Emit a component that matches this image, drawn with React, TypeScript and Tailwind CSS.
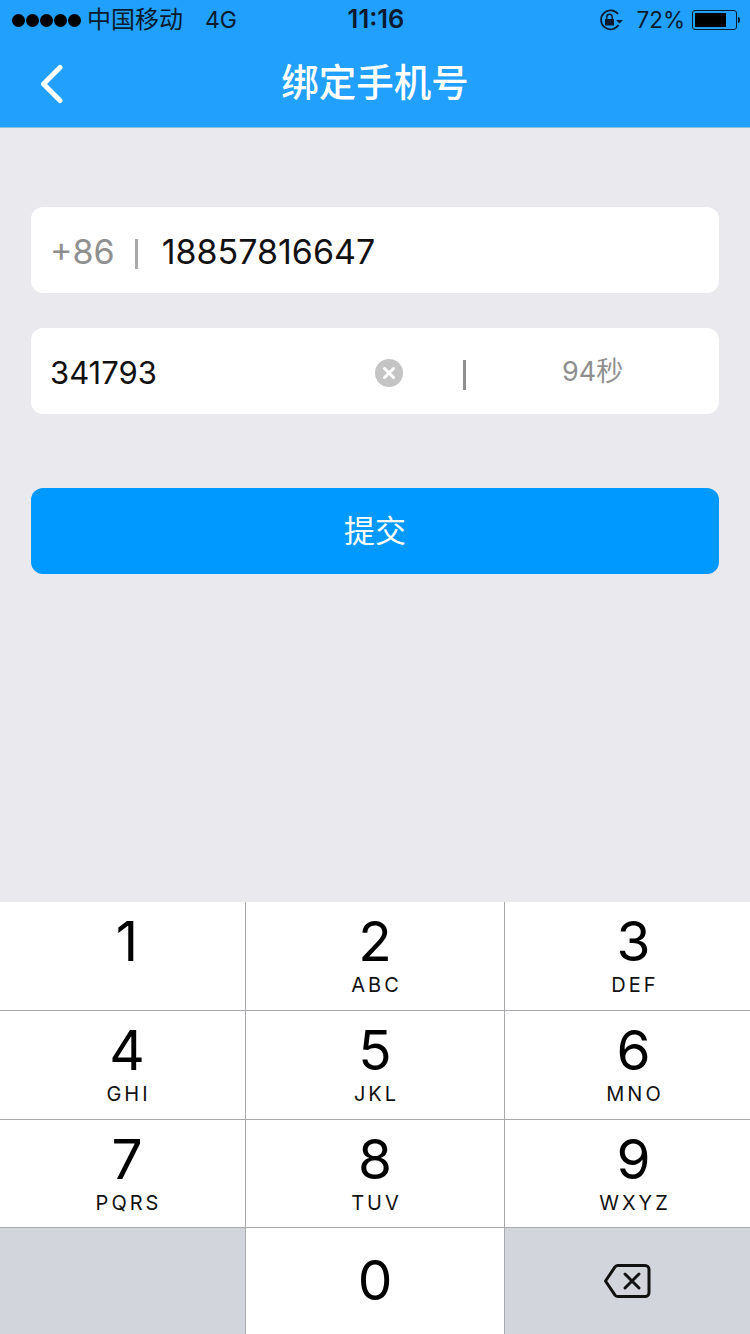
const font = { fontFamily: '"Inter", "Noto Sans CJK SC", sans-serif' };

const keys = [
  { n: "1", s: "", cls: "pl-[9px]" },
  { n: "2", s: "ABC", cls: "pl-0" },
  { n: "3", s: "DEF", cls: "pl-[12px]" },
  { n: "4", s: "GHI", cls: "pl-[9px]" },
  { n: "5", s: "JKL", cls: "pl-0" },
  { n: "6", s: "MNO", cls: "pl-[12px]" },
  { n: "7", s: "PQRS", cls: "pl-[9px]" },
  { n: "8", s: "TUV", cls: "pl-0" },
  { n: "9", s: "WXYZ", cls: "pl-[12px]" },
];

const Key = ({ n, s, cls }: { n: string; s: string; cls: string }) => (
  <div className={`flex flex-col items-center bg-white pt-[9px] ${cls}`}>
    <span className="text-[55px] leading-[60px] text-black">{n}</span>
    <span className="pl-[3px] pt-[1px] text-[20px] leading-[26px] tracking-[3px] text-[#111]">{s}</span>
  </div>
);

const StatusBar = () => (
  <div className="flex h-[40px] items-center justify-between pl-[12px] pr-[10px] text-[#0b1a2e]">
    <div className="flex w-[300px] items-center text-[24px]">
      <div className="flex gap-[1px]">
        {[0, 1, 2, 3, 4].map((i) => (
          <span key={i} className="h-[13px] w-[13px] rounded-full bg-black" />
        ))}
      </div>
      <span className="ml-[6px]">中国移动</span>
      <span className="ml-[22px] text-[23px]">4G</span>
    </div>
    <span className="-translate-y-[1px] text-[25.5px] font-semibold">11:16</span>
    <div className="flex w-[300px] items-center justify-end text-[22.5px]">
      <svg width="24" height="22" viewBox="0 0 24 22" fill="none" className="mr-[13px]">
        <path d="M19 5A9.5 9.5 0 1 0 19.5 16" stroke="#0b1a2e" strokeWidth="1.7" />
        <path d="M17 11h7l-3.5 3.5z" fill="#0b1a2e" />
        <rect x="6" y="10" width="9" height="6.5" fill="#0b1a2e" />
        <path d="M7.8 10V8a2.7 2.7 0 0 1 5.4 0v2" stroke="#0b1a2e" strokeWidth="1.4" />
      </svg>
      <span>72%</span>
      <div className="ml-[7px] flex items-center">
        <div className="h-[20px] w-[45px] rounded-[3px] border border-[#0b1a2e] p-[2px]">
          <div className="h-full w-[31px] bg-black" />
        </div>
        <div className="ml-[1px] h-[6px] w-[2px] rounded-r-full bg-[#0b1a2e]" />
      </div>
    </div>
  </div>
);

export default function App() {
  return (
    <div className="flex h-[1334px] w-[750px] flex-col overflow-hidden bg-[#e9e9ee]" style={font}>
      <header className="h-[128px] border-b border-[#8fbfe6] bg-[#21a0fd]">
        <StatusBar />
        <div className="relative flex h-[87px] items-center justify-center">
          <svg width="26" height="40" viewBox="0 0 26 40" fill="none" className="absolute left-[38px] top-[24px]">
            <path d="M22 3.5L5.5 20 22 36.5" stroke="#fff" strokeWidth="5" strokeLinecap="round" strokeLinejoin="round" />
          </svg>
          <h1 className="text-[37.5px] font-medium text-white">绑定手机号</h1>
        </div>
      </header>

      <main className="flex flex-1 flex-col px-[31px] pt-[79px]">
        <div className="flex h-[86px] items-center rounded-[12px] bg-white pl-[19px]">
          <span className="translate-y-[1px] text-[34px] text-[#8f8f8f]">+86</span>
          <div className="ml-[20px] h-[30px] w-[3px] translate-y-[4px] bg-[#a9a9a9]" />
          <span className="ml-[24px] translate-y-[1px] text-[34px] text-[#111]">18857816647</span>
        </div>

        <div className="mt-[35px] flex h-[86px] items-center rounded-[12px] bg-white pl-[19px]">
          <span className="w-[325px] translate-y-[2px] text-[31px] text-[#111]">341793</span>
          <div className="flex h-[28px] w-[28px] translate-y-[2px] items-center justify-center rounded-full bg-[#c4c4c4]">
            <svg width="14" height="14" viewBox="0 0 14 14">
              <path d="M2.5 2.5l9 9M11.5 2.5l-9 9" stroke="#fff" strokeWidth="3" strokeLinecap="round" />
            </svg>
          </div>
          <div className="ml-[60px] h-[30px] w-[3px] translate-y-[4px] bg-[#8f8f8f]" />
          <span className="ml-[96px] translate-y-[1px] text-[27px] text-[#8f8f8f]">94秒</span>
        </div>

        <button className="mt-[74px] h-[86px] rounded-[12px] bg-[#0099ff] text-[31px] text-white">提交</button>
      </main>

      <div className="grid h-[432px] grid-cols-[245px_258px_1fr] grid-rows-[108px_108px_107px_106px] gap-[1px] bg-[#a7a9ad]">
        {keys.map((k) => (
          <Key key={k.n} n={k.n} s={k.s} cls={k.cls} />
        ))}
        <div className="bg-[#d2d5db]" />
        <div className="flex items-center justify-center bg-white pb-[2px]">
          <span className="text-[55px] text-black">0</span>
        </div>
        <div className="flex items-center justify-center bg-[#d2d5db]">
          <svg width="48" height="36" viewBox="0 0 48 36" fill="none" className="mr-[2px]">
            <path
              d="M15 2.5h27a4 4 0 0 1 4 4v23a4 4 0 0 1-4 4H15a4 4 0 0 1-3-1.4L2.5 18 12 3.9a4 4 0 0 1 3-1.4z"
              stroke="#111"
              strokeWidth="3"
              strokeLinejoin="round"
            />
            <path d="M22 11l14 14M36 11L22 25" stroke="#111" strokeWidth="3" strokeLinecap="round" />
          </svg>
        </div>
      </div>
    </div>
  );
}
